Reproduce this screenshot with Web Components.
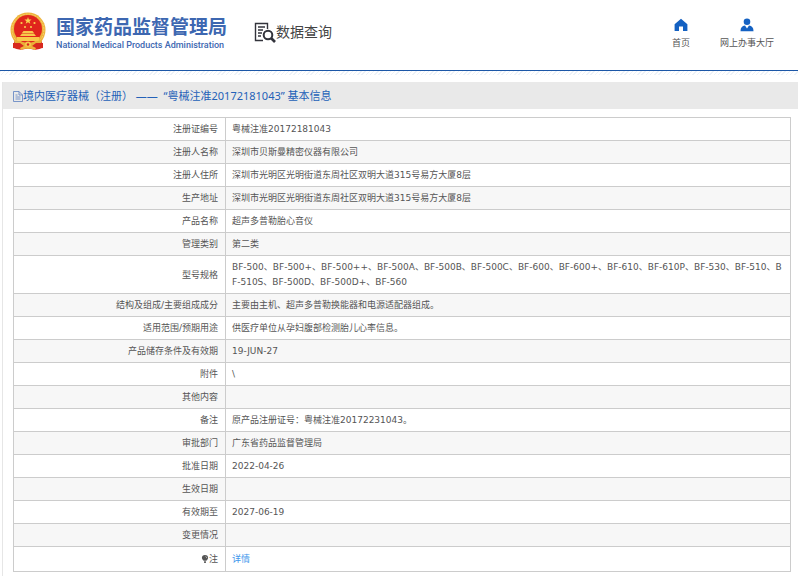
<!DOCTYPE html>
<html lang="zh-CN">
<head>
<meta charset="utf-8">
<title>数据查询</title>
<style>
body { margin: 0; background: #fff; color: #555; font-family: "Noto Sans", "Noto Sans CJK SC", sans-serif; font-size: 9px; line-height: 15px; }
</style>
</head>
<body>
<nmpa-page></nmpa-page>

<template id="t-emblem">
<style>
:host { display: block; width: 36px; height: 40px; }
svg { display: block; width: 100%; height: 100%; }
</style>
<svg viewBox="0 0 36 40" role="img" aria-label="国徽">
<path d="M5 27L3 35Q8 39 15 37H21Q28 39 33 35L31 27Z" fill="#d8281e"/>
<circle cx="18" cy="18" r="17.5" fill="#eeb33c"/>
<circle cx="18" cy="18" r="15.9" fill="none" stroke="#f8d06a" stroke-width="1" stroke-dasharray="2 1"/>
<circle cx="18" cy="17" r="14" fill="#e0251d"/>
<path d="M18 5l.9 2.500 2.700.1-2.100 1.600.8 2.600-2.300-1.500-2.300 1.500.8-2.600-2.100-1.600 2.700-.1z" fill="#fbd34f"/>
<g fill="#fbd34f"><circle cx="11.500" cy="11" r="1.100"/><circle cx="24.500" cy="11" r="1.100"/><circle cx="15" cy="15" r="1"/><circle cx="21" cy="15" r="1"/></g>
<path d="M12 21l1.500-2h9l1.500 2zM10 24l2-2.500h12l2 2.500zM7 25h22v4H7z" fill="#f8c84a"/>
<path d="M4 27q7 4 14 4t14-4l-1 5q-6 3-13 3T5 32z" fill="#e9af38"/>
<path d="M3 31l7 0 4 3-4 3-7-1zM33 31l-7 0-4 3 4 3 7-1z" fill="#d8281e"/>
<circle cx="18" cy="32.500" r="3" fill="#f6c54b"/><circle cx="18" cy="32.500" r="1.200" fill="#d8281e"/>
<path d="M10 36q4-3 8-1 4-2 8 1l-1 2q-4-2-7-1-3-1-7 1z" fill="#eeb33c"/>
</svg>
</template>

<template id="t-header">
<style>
:host { display: block; }
header { display: flex; align-items: flex-start; height: 70px; padding: 0 24px 0 10px; border-bottom: 1px solid #1c57a7; }
nmpa-emblem { margin-top: 12px; }
.brand { margin: 15px 0 0 10px; color: #3d67b1; white-space: nowrap; }
.cn { font-size: 19px; line-height: 24px; font-weight: 700; }
.en { font-family: Roboto, "Liberation Sans", sans-serif; font-size: 9px; line-height: 12px; font-weight: 500; }
.query { display: flex; align-items: center; margin: 20px 0 0 27px; font-size: 14px; line-height: 24px; color: #444; white-space: nowrap; }
.query svg { width: 22px; height: 22px; }
nav { display: flex; gap: 30px; margin: 18px 0 0 auto; }
.hatch { height: 4px; background: repeating-linear-gradient(135deg, #edf2f8 0 1px, #fff 1px 3px); }
</style>
<header>
<nmpa-emblem></nmpa-emblem>
<div class="brand"><div class="cn">国家药品监督管理局</div><div class="en">National Medical Products Administration</div></div>
<div class="query">
<svg viewBox="0 0 22 22" fill="none" stroke="#33343c" aria-hidden="true"><path d="M9 19.500H1.500V2.500H13.500V8" stroke-width="1.400"/><path d="M4 6h7M4 9h5M4 12h4M4 15h3" stroke-width="1.300"/><circle cx="14" cy="14" r="4.300" stroke-width="2"/><path d="M17 17l4 4" stroke-width="2.600"/></svg>
<span>数据查询</span></div>
<nav>
<nmpa-link><svg slot="icon" viewBox="0 0 14 14" fill="#1461c2" aria-hidden="true"><path d="M7 .800L.600 6.300V13H5V8.500H9V13h4.400V6.300z"/></svg>首页</nmpa-link>
<nmpa-link><svg slot="icon" viewBox="0 0 14 14" fill="#1461c2" aria-hidden="true"><circle cx="7" cy="3.700" r="3.300"/><path d="M.500 13.300Q.500 8 5 7.600L7 10.500 9 7.600Q13.500 8 13.500 13.300z"/></svg>网上办事大厅</nmpa-link>
</nav>
</header>
<div class="hatch"></div>
</template>

<template id="t-link">
<style>
:host { display: block; }
a { display: flex; flex-direction: column; align-items: center; gap: 3px; color: #555; text-decoration: none; white-space: nowrap; }
::slotted(svg) { display: block; width: 14px; height: 14px; }
</style>
<a href="#"><slot name="icon"></slot><span><slot></slot></span></a>
</template>

<template id="t-panel">
<style>
:host { display: block; margin: 7px 0 0 2px; border-left: 1px solid #e6e6e6; }
h1 { display: flex; align-items: center; margin: 0; padding: 5px 10px 4px; background: #e9e9e9; color: #2461b8; font-size: 11px; line-height: 18px; font-weight: 400; white-space: pre; }
h1 svg { width: 10px; height: 12px; }
.body { padding: 8px 7px 4px 10px; }
</style>
<h1><svg viewBox="0 0 10 12" fill="none" stroke="#5a7fc0" aria-hidden="true"><path d="M.500 1.500H6L9.500 5V11.500H.500zM6 1.500V5H9.500M2.500 5H4.500M2.500 7H7.500M2.500 9H7.500" stroke-width=".800"/></svg><slot name="title"></slot></h1>
<div class="body"><slot></slot></div>
</template>

<template id="t-table">
<style>
:host { display: block; font-family: "DejaVu Sans", "Noto Sans CJK SC", sans-serif; }
table { width: 100%; border-collapse: separate; border-spacing: 0; table-layout: fixed; border: solid #ccc; border-width: 1px 1px 0 1px; }
col.k { width: 212px; }
th, td { padding: 4px 6px 3px; border-bottom: 1px solid #ccc; font-weight: 400; vertical-align: middle; height: 15px; }
th { text-align: right; border-right: 1px solid #ccc; padding-right: 7px; }
td { text-align: left; word-break: break-all; padding-right: 8px; }
tr:nth-child(even) { background: #f7f7f7; }
tr:last-child > * { padding-top: 5px; padding-bottom: 4px; }
a { color: #3f97ec; text-decoration: none; }
svg { width: 8px; height: 8px; vertical-align: -1px; }
</style>
<table><colgroup><col class="k"><col></colgroup><tbody></tbody></table>
</template>

<script>
class Base extends HTMLElement {
  connectedCallback() {
    if (this.shadowRoot) return;
    const root = this.attachShadow({ mode: "open" });
    root.append(document.getElementById(this.constructor.tpl).content.cloneNode(true));
    this.fill?.(root);
  }
}
const ROWS = [
  ["注册证编号", "粤械注准20172181043"],
  ["注册人名称", "深圳市贝斯曼精密仪器有限公司"],
  ["注册人住所", "深圳市光明区光明街道东周社区双明大道315号易方大厦8层"],
  ["生产地址", "深圳市光明区光明街道东周社区双明大道315号易方大厦8层"],
  ["产品名称", "超声多普勒胎心音仪"],
  ["管理类别", "第二类"],
  ["型号规格", "BF-500、BF-500+、BF-500++、BF-500A、BF-500B、BF-500C、BF-600、BF-600+、BF-610、BF-610P、BF-530、BF-510、BF-510S、BF-500D、BF-500D+、BF-560"],
  ["结构及组成/主要组成成分", "主要由主机、超声多普勒换能器和电源适配器组成。"],
  ["适用范围/预期用途", "供医疗单位从孕妇腹部检测胎儿心率信息。"],
  ["产品储存条件及有效期", "19-JUN-27"],
  ["附件", "\\"],
  ["其他内容", ""],
  ["备注", "原产品注册证号：粤械注准20172231043。"],
  ["审批部门", "广东省药品监督管理局"],
  ["批准日期", "2022-04-26"],
  ["生效日期", ""],
  ["有效期至", "2027-06-19"],
  ["变更情况", ""]
];
const BULB = '<svg viewBox="0 0 8 9" aria-hidden="true"><path d="M4 0a3.500 3.500 0 0 0-3.500 3.500Q.500 5 2.500 6.500H5.500Q7.500 5 7.500 3.500A3.500 3.500 0 0 0 4 0zM3 7h2v2H3z" fill="#555"/><path d="M4.500 1.500Q6 2 6 3.500" fill="none" stroke="#ddd" stroke-width=".700"/></svg>';
customElements.define("nmpa-emblem", class extends Base { static tpl = "t-emblem"; });
customElements.define("nmpa-link", class extends Base { static tpl = "t-link"; });
customElements.define("nmpa-header", class extends Base { static tpl = "t-header"; });
customElements.define("info-panel", class extends Base { static tpl = "t-panel"; });
customElements.define("info-table", class extends Base {
  static tpl = "t-table";
  fill(root) {
    root.querySelector("tbody").innerHTML =
      ROWS.map(([k, v]) => `<tr><th scope="row">${k}</th><td>${v}</td></tr>`).join("") +
      `<tr><th scope="row">${BULB}注</th><td><a href="#">详情</a></td></tr>`;
  }
});
customElements.define("nmpa-page", class extends HTMLElement {
  connectedCallback() {
    this.attachShadow({ mode: "open" }).innerHTML = `<style>:host{display:block}</style>
<nmpa-header></nmpa-header>
<main><info-panel><span slot="title">境内医疗器械（注册） ——  “粤械注准20172181043” 基本信息</span><info-table></info-table></info-panel></main>`;
  }
});
</script>
</body>
</html>
